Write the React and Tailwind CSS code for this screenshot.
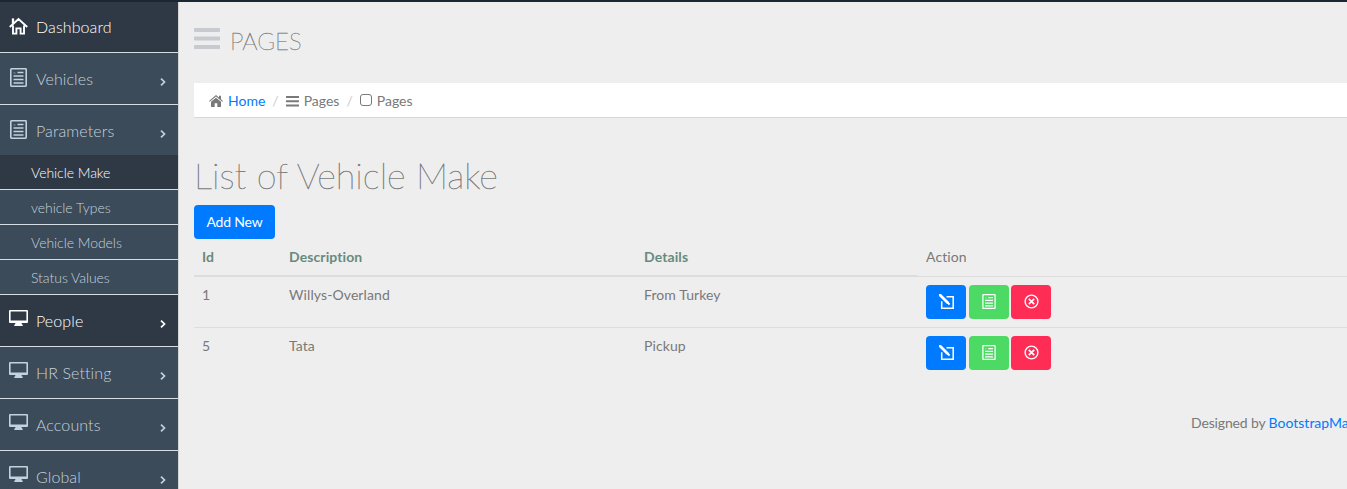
import React from "react";

const HomeIcon = ({ className }) => (
  <svg className={className} viewBox="0 0 20 18" fill="none" stroke="currentColor" strokeWidth="2">
    <path d="M.8 10 10 1.600l9.200 8.400M4.200 8.500V17h3.600v-5.500h4.400V17h3.600V8.500" />
    <path d="M4.200 6.500V1" strokeWidth="2.400" />
  </svg>
);

const DocIcon = ({ className }) => (
  <svg className={className} viewBox="0 0 17 19" fill="none" stroke="currentColor">
    <rect x="0.800" y="0.800" width="15.400" height="17.400" rx="0.600" strokeWidth="1.600" />
    <path d="M7.500 4.500h6M3.500 8h10M3.500 11.500h10M3.500 15h10" strokeWidth="1.500" />
    <path d="M3.500 5h2" strokeWidth="0.600" />
  </svg>
);

const MonitorIcon = ({ className }) => (
  <svg className={className} viewBox="0 0 19 17" fill="currentColor">
    <path fillRule="evenodd" d="M1 0h17a1 1 0 0 1 1 1v11a1 1 0 0 1-1 1h-5.500l.5 1.500h.3a.800.800 0 0 1 0 1.500H5.700a.800.800 0 0 1 0-1.500H6l.5-1.500H1a1 1 0 0 1-1-1V1a1 1 0 0 1 1-1Zm.6 1.600v8.800h15.800V1.600Z" />
  </svg>
);

const Chevron = () => (
  <svg className="mt-1.5 h-2 w-1.5" viewBox="0 0 6 8" fill="none" stroke="currentColor" strokeWidth="1.700">
    <path d="m1 .6 3.500 3.400L1 7.400" />
  </svg>
);

const PencilIcon = () => (
  <svg className="h-[15px] w-[15px]" viewBox="0 0 15 15" fill="none" stroke="currentColor">
    <path d="M7.500 2.700h6.700v11.500H2.700V7.200" strokeWidth="1.500" />
    <path d="m1 1 7.500 7.500" strokeWidth="2.800" strokeLinecap="round" />
    <path d="m8 8 2.600 2.500" strokeWidth="1.800" />
  </svg>
);

const CloseIcon = () => (
  <svg className="ml-px h-[15px] w-[15px]" viewBox="0 0 15 15" fill="none" stroke="currentColor" strokeWidth="1.400">
    <circle cx="7.500" cy="7.500" r="6.400" />
    <path d="m4.800 4.800 5.400 5.400m0-5.400-5.400 5.400" strokeWidth="1.700" />
  </svg>
);

const MenuIcon = ({ className }) => (
  <svg className={className} viewBox="0 0 26 22" fill="currentColor">
    <rect width="26" height="4" rx="0.700" />
    <rect y="8.500" width="26" height="4" rx="0.700" />
    <rect y="17" width="26" height="4" rx="0.700" />
  </svg>
);

function NavItem({ icon: Icon, iconClass, label, active, arrow = true, border = true }) {
  return (
    <a
      className={`flex h-[52px] shrink-0 pl-[9px] pr-3 ${border ? "border-b border-[#d7dde4]" : ""} ${
        active ? "bg-[#2f3945] text-white" : "bg-[#3b4b59] text-[#c4d1de]"
      }`}
    >
      <span className="w-[27px] shrink-0 pt-[15px]">
        <Icon className={iconClass} />
      </span>
      <span className="flex-1 pt-[14px] text-base leading-6 font-light tracking-[0.1px]">{label}</span>
      {arrow && (
        <span className="pt-[19px]">
          <Chevron />
        </span>
      )}
    </a>
  );
}

const subItems = ["Vehicle Make", "vehicle Types", "Vehicle Models", "Status Values"];
const rows = [
  { id: 1, description: "Willys-Overland", details: "From Turkey" },
  { id: 5, description: "Tata", details: "Pickup" },
];

function Sidebar() {
  const doc = "h-[19px] w-[17px] ml-px";
  const monitor = "h-[17px] w-[19px]";
  return (
    <nav className="flex w-[179px] shrink-0 flex-col overflow-hidden border-r border-[#d5d5d5] bg-[#3b4b59]">
      <div className="-mt-px flex shrink-0 flex-col">
        <NavItem icon={HomeIcon} iconClass="mt-px h-[18px] w-[19px]" label="Dashboard" active arrow={false} />
        <NavItem icon={DocIcon} iconClass={doc} label="Vehicles" />
        <NavItem icon={DocIcon} iconClass={doc} label="Parameters" border={false} />
      </div>
      <div className="-mt-0.5 shrink-0">
        {subItems.map((s, i) => (
          <a
            key={s}
            className={`block h-[35px] border-b border-[#d7dde4] pl-[31px] text-sm leading-[36px] tracking-[-0.05px] ${
              i === 0 ? "bg-[#2f3945] text-white" : "bg-[#3b4b59] text-[#c4d1de]"
            } font-light`}
          >
            {s}
          </a>
        ))}
      </div>
      <NavItem icon={MonitorIcon} iconClass={monitor} label="People" active />
      <NavItem icon={MonitorIcon} iconClass={monitor} label="HR Setting" />
      <NavItem icon={MonitorIcon} iconClass={monitor} label="Accounts" />
      <NavItem icon={MonitorIcon} iconClass={monitor} label="Global" />
    </nav>
  );
}

export default function App() {
  return (
    <div className="flex h-[489px] w-full flex-col overflow-hidden bg-[#eeeeee] font-['Lato',sans-serif] text-sm text-[#797979]">
      <div className="h-0.5 shrink-0 bg-[#1a2732]" />
      <div className="flex min-h-0 flex-1">
        <Sidebar />
        <main className="min-w-0 flex-1 overflow-hidden pl-[15px]">
          <h3 className="flex h-[81px] pt-[26px] text-2xl leading-[26px] font-thin text-[#797979] [-webkit-text-stroke:0.35px_#797979]">
            <MenuIcon className="mr-2.5 h-[22px] w-[26px] text-[#c7cacf]" />
            PAGES
          </h3>
          <ol className="flex h-[35px] items-center border-b border-[#d8d8d8] bg-white pt-0.5 pl-[15px]">
            <li className="flex items-center">
              <svg className="mr-[5px] h-3 w-3.5" viewBox="0 0 14 12" fill="currentColor">
                <path d="M7 0 0 6l.7.800L7 1.600l6.300 5.200.7-.8-2-1.700V.8h-2v1.800ZM7 2.700 2 6.800V12h3.700V8.300h2.600V12H12V6.800Z" />
              </svg>
              <a className="text-[#007aff]">Home</a>
            </li>
            <li className="flex items-center">
              <span className="pr-[7px] pl-[7px] text-[#cccccc]">/</span>
              <MenuIcon className="mr-[5px] h-[11px] w-[13px]" />
              Pages
            </li>
            <li className="flex items-center">
              <span className="pr-[7px] pl-[7px] text-[#cccccc]">/</span>
              <span className="mr-[5px] mb-0.5 h-3 w-3 rounded-[3px] border border-[#797979]" />
              Pages
            </li>
          </ol>
          <h1 className="mt-[38px] h-[49px] text-4xl leading-[38px] font-thin [-webkit-text-stroke:0.4px_#797979]">
            List of Vehicle Make
          </h1>
          <button className="block h-[34px] w-[81px] rounded bg-[#007aff] text-sm tracking-[-0.2px] text-white">
            Add New
          </button>
          <table className="w-[1200px] table-fixed border-collapse text-left tracking-[0.1px]">
            <colgroup>
              <col className="w-[87px]" />
              <col className="w-[355px]" />
              <col className="w-[282px]" />
              <col />
            </colgroup>
            <thead>
              <tr className="h-[37px] text-[#688a7e]">
                <th className="border-b-2 border-[#dddddd] px-2">Id</th>
                <th className="border-b-2 border-[#dddddd] px-2">Description</th>
                <th className="border-b-2 border-[#dddddd] px-2">Details</th>
                <td className="border-b border-[#dddddd] px-2 text-[#797979]">Action</td>
              </tr>
            </thead>
            <tbody>
              {rows.map((r, i) => (
                <tr key={r.id} className={`h-[51px] align-top leading-5 ${i === 0 ? "border-b border-[#dddddd]" : ""}`}>
                  <td className="p-2">{r.id}</td>
                  <td className="p-2">{r.description}</td>
                  <td className="p-2">{r.details}</td>
                  <td className="p-2">
                    <div className="flex text-white">
                      <a className="mr-[3px] flex h-[34px] w-10 items-center justify-center rounded bg-[#007aff]">
                        <PencilIcon />
                      </a>
                      <a className="mr-0.5 flex h-[34px] w-10 items-center justify-center rounded bg-[#4cd964]">
                        <DocIcon className="h-[15px] w-[14px]" />
                      </a>
                      <a className="flex h-[34px] w-10 items-center justify-center rounded bg-[#ff2d55]">
                        <CloseIcon />
                      </a>
                    </div>
                  </td>
                </tr>
              ))}
            </tbody>
          </table>
          <p className="mt-[35px] pl-[997px] leading-5 tracking-[-0.15px] whitespace-nowrap">
            Designed by <a className="tracking-normal text-[#007aff]">BootstrapMade</a>
          </p>
        </main>
      </div>
    </div>
  );
}
